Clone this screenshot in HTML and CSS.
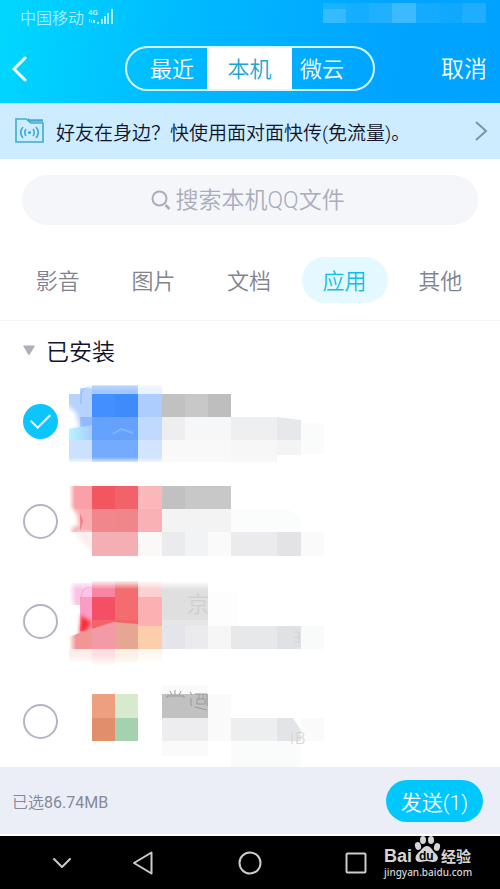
FILE: index.html
```html
<!DOCTYPE html>
<html lang="zh-CN">
<head>
  <meta charset="UTF-8" />
  <meta name="viewport" content="width=device-width, initial-scale=1.0"/>
  <title>本机文件</title>
  <link rel="stylesheet" href="styles.css">
</head>
<body>

  <header class="top">
    <div class="status">
      <span>中国移动</span>
      <svg class="signal" width="26" height="18" viewBox="0 0 26 18" fill="#a5efff">
        <text x="0" y="7" class="signal-text">4G</text>
        <path d="M1 11h1v3H1zM3 12h1v3H3zM5 12h2v3H5zM9 14h2v2H9zM13 11h2v5h-2zM16 8h2v8h-2zM19 5h2v11h-2zM23 1h2v15h-2z"/>
      </svg>
      <svg class="status-right" width="163" height="20" viewBox="0 0 163 20" fill="#fff">
        <path d="M0 0h23v20H0z" opacity=".1"/>
        <path d="M0 6h23v14H0z" opacity=".12"/>
        <path d="M23 0h23v20H23z" opacity=".08"/>
        <path d="M46 0h23v20H46z" opacity=".12"/>
        <path d="M69 0h24v20H69z" opacity=".24"/>
        <path d="M93 0h23v20H93z" opacity=".08"/>
        <path d="M116 0h23v20h-23z" opacity=".06"/>
        <path d="M139 0h24v20h-24z" opacity=".12"/>
      </svg>
    </div>
    <nav class="nav">
      <button class="back" aria-label="返回">
        <svg width="16" height="28" viewBox="0 0 16 28" fill="none" stroke="#fff" stroke-width="3" stroke-linecap="round"><path d="M13 3L2 14L13 25"/></svg>
      </button>
      <div class="segment">
        <button class="seg-left">最近</button>
        <button class="seg-active">本机</button>
        <button class="seg-right">微云</button>
      </div>
      <button class="cancel">取消</button>
    </nav>
  </header>

  <a class="banner" href="#">
    <svg width="30" height="26" viewBox="0 0 30 26" fill="none" stroke="#3fabd6" stroke-width="1.6">
      <path d="M1 1h10l5 4h12v19H1zM15 2h13M13 1l3 2h12"/>
      <circle cx="14.500" cy="14.500" r="1.600" fill="#3fabd6" stroke="none"/>
      <path d="M11 11Q8.500 14.500 11 18M18 11Q20.500 14.500 18 18M8 9Q3.500 14.500 8 20M21 9Q25.500 14.500 21 20"/>
    </svg>
    <span>好友在身边？快使用面对面快传(免流量)。</span>
    <svg class="arrow" width="14" height="22" viewBox="0 0 14 22" fill="none" stroke="#7d93a2" stroke-width="2"><path d="M2 2L12 11L2 20"/></svg>
  </a>

  <label class="search">
    <svg width="20" height="20" viewBox="0 0 20 20" fill="none" stroke="#a9acbb" stroke-width="2"><circle cx="8.500" cy="8.500" r="7"/><path d="M14.500 15l4 4" stroke-width="2.500"/></svg>
    <input type="text" placeholder="搜索本机QQ文件" aria-label="搜索本机QQ文件" />
  </label>

  <div class="tabs">
    <button>影音</button>
    <button>图片</button>
    <button>文档</button>
    <button class="active">应用</button>
    <button>其他</button>
  </div>

  <main class="files">
    <h2 class="group">
      <svg width="12" height="10" viewBox="0 0 12 10"><path d="M1 .5h10q1 0 .6 1L6.800 9.500q-.8.800-1.600 0L.4 1.500Q0 .5 1 .5z" fill="#adb0be"/></svg>
      已安装
    </h2>

    <div class="row">
      <input type="checkbox" aria-label="文件1" checked />
      <svg width="255" height="100" viewBox="0 0 255 100">
        <defs>
          <linearGradient id="fade" x2="0" y2="1"><stop offset="0" stop-color="#fff"/><stop offset="1" stop-color="#fff" stop-opacity="0"/></linearGradient>
          <linearGradient id="rise" x2="0" y2="1"><stop offset="0" stop-color="#fff" stop-opacity="0"/><stop offset="1" stop-color="#fff"/></linearGradient>
          <linearGradient id="side"><stop offset="0" stop-color="#fff"/><stop offset="1" stop-color="#fff" stop-opacity="0"/></linearGradient>
          <linearGradient id="cyan"><stop offset="0" stop-color="#b9f3ff"/><stop offset="1" stop-color="#a7cdff"/></linearGradient>
          <filter id="soft" x="-50%" y="-50%" width="200%" height="200%"><feGaussianBlur stdDeviation="2"/></filter>
        </defs>
        <path d="M0 23h23v46H0z" fill="#b7d2ff"/>
        <path d="M11 46h12v14H11z" fill="#8fbaff"/>
        <path d="M-4 32L7 42 11 58-4 60z" fill="#fff" filter="url(#soft)"/>
        <path d="M0 58l23-4v15H0z" fill="url(#cyan)"/>
        <path d="M0 69h23v22H0z" fill="#cce0ff"/>
        <path d="M11 23V17h58v6z" fill="#b4d2ff"/>
        <path d="M23 14h46v10H23z" fill="#a3c8ff"/>
        <path d="M23 23h23v23H23z" fill="#438fff"/>
        <path d="M46 23h23v23H46z" fill="#3e8bfa"/>
        <path d="M23 46h46v23H23z" fill="#65a2fd"/>
        <path d="M23 69h46v22H23z" fill="#73abff"/>
        <path d="M69 14h24v9H69z" fill="#eaf2ff"/>
        <path d="M69 23h24v23H69z" fill="#adcdff"/>
        <path d="M69 46h24v23H69z" fill="#bfd9ff"/>
        <path d="M69 69h24v22H69z" fill="#d2e4ff"/>
        <path d="M12 33V24Q12 17 20 16H68" fill="none" stroke="#6da5ef" opacity=".6"/>
        <path d="M44 63l8-5 12 4" fill="none" stroke="#83b4ff" stroke-width="2"/>
        <path d="M0 10h93v9H0z" fill="url(#fade)"/>
        <path d="M0 86h93v7H0z" fill="url(#rise)"/>
        <path d="M93 23h23v23H93z" fill="#c1c1c1"/>
        <path d="M116 23h23v23h-23z" fill="#c8c8c8"/>
        <path d="M139 23h23v23h-23z" fill="#bebebe"/>
        <path d="M93 46h23v23H93z" fill="#eeeef0"/>
        <path d="M116 46h46v23h-46z" fill="#f6f7f9"/>
        <path d="M162 46h46v23h-46z" fill="#edeff1"/>
        <path d="M208 46l24 3v20h-24z" fill="#e7e8eb"/>
        <path d="M232 52h23v31h-23z" fill="#fafbfb"/>
        <path d="M93 69h69v22H93z" fill="#f9f9f9"/>
        <path d="M162 69h46v22h-46z" fill="#f7f7f7"/>
        <path d="M208 69h24v15h-24z" fill="#f4f4f4"/>
      </svg>
    </div>

    <div class="row">
      <input type="checkbox" aria-label="文件2" />
      <svg width="255" height="100" viewBox="0 0 255 100">
        <path d="M0 15h23v23H0z" fill="#faa0a6"/>
        <path d="M0 38h23v23H0z" fill="#f9adb1"/>
        <path d="M11 42l3 8-3 10z" fill="#ee757d"/>
        <path d="M-3 34L8 42 10 55-3 57z" fill="#fff" filter="url(#soft)"/>
        <path d="M5 61h18v20z" fill="#fdebec" filter="url(#soft)"/>
        <path d="M23 15h23v23H23z" fill="#f2565f"/>
        <path d="M46 15h23v23H46z" fill="#f1626b"/>
        <path d="M23 38h23v23H23z" fill="#f1868d"/>
        <path d="M46 38h23v23H46z" fill="#f0868a"/>
        <path d="M23 61h46v24H23z" fill="#f3afb3"/>
        <path d="M69 15h24v23H69z" fill="#fbb8bb"/>
        <path d="M69 38h24v23H69z" fill="#f9b1b5"/>
        <path d="M69 61h24v24H69z" fill="#fdf8f8"/>
        <path d="M0 15h6v46H0z" fill="url(#side)"/>
        <path d="M93 15h23v23H93z" fill="#c1c1c1"/>
        <path d="M116 15h46v23h-46z" fill="#c8c8c8"/>
        <path d="M93 38h69v23H93z" fill="#f3f3f3"/>
        <path d="M162 38h57l13 10v13h-70z" fill="#fbfcfc"/>
        <path d="M93 61h23v24H93z" fill="#eaebed"/>
        <path d="M116 61h23v24h-23z" fill="#f1f3f5"/>
        <path d="M139 61h23v24h-23z" fill="#fafafa"/>
        <path d="M162 61h46v24h-46z" fill="#ebebed"/>
        <path d="M208 61h24v24h-24z" fill="#e3e3e5"/>
        <path d="M232 61h23v24h-23z" fill="#fafafa"/>
      </svg>
    </div>

    <div class="row">
      <input type="checkbox" aria-label="文件3" />
      <svg width="255" height="100" viewBox="0 0 255 100">
        <path d="M0 12h23v22H0z" fill="#fdc3e6"/>
        <path d="M11 26h12v34H11z" fill="#fb9cc4"/>
        <path d="M11 44l12 8-12 14z" fill="#fb252c" filter="url(#soft)"/>
        <path d="M-4 27L8 36 10 54-4 60z" fill="#fff" filter="url(#soft)"/>
        <path d="M0 66l23-9v21H0z" fill="#f19595"/>
        <path d="M23 10h23v16H23z" fill="#f985a2"/>
        <path d="M23 26h23v23H23z" fill="#f54f65"/>
        <path d="M46 10h23v39H46z" fill="#f36d70"/>
        <path d="M23 49h23v29H23z" fill="#f29ba6"/>
        <path d="M46 49h23v29H46z" fill="#e5a794"/>
        <path d="M23 49h46v4l-25-2-21 7z" fill="#f36369"/>
        <path d="M69 10h24v16H69z" fill="#fdd1d1"/>
        <path d="M69 26h24v29H69z" fill="#fdb0b2"/>
        <path d="M69 55h24v23H69z" fill="#fdcdac"/>
        <path d="M0 78h23v12H0z" fill="#fdeeec"/>
        <path d="M23 78h23v16H23z" fill="#fbdee1"/>
        <path d="M46 78h23v14H46z" fill="#fcf0e5"/>
        <path d="M69 78h24v12H69z" fill="#fff8f1"/>
        <path d="M12 32V26Q12 17 22 16H46" fill="none" stroke="#f58fc0" opacity=".6"/>
        <path d="M0 10h7v68H0z" fill="url(#side)"/>
        <path d="M0 9h93v9H0z" fill="url(#fade)"/>
        <path d="M0 84h93v11H0z" fill="url(#rise)"/>
        <path d="M93 11h46v38H93z" fill="#dfdfdf"/>
        <path d="M93 10h46v9H93z" fill="url(#fade)"/>
        <path d="M93 49v6h46v-6z" fill="#e6e6e6"/>
        <text x="118" y="41" class="ghost">京东</text>
        <path d="M139 20h30v35h-30z" fill="#fdfdfd"/>
        <path d="M93 55h23v23H93z" fill="#e3e5ea"/>
        <path d="M116 55h23v23h-23z" fill="#ebebed"/>
        <path d="M139 55h23v23h-23z" fill="#f6f6f6"/>
        <path d="M162 55h46v23h-46z" fill="#e7e8ea"/>
        <path d="M208 55h24v23h-24z" fill="#dfe1e5"/>
        <path d="M232 55h23v23h-23z" fill="#f9fafa"/>
        <path d="M225 61h5v5h-4M230 66v5h-5" fill="none" stroke="#cfd1d6"/>
      </svg>
    </div>

    <div class="row">
      <input type="checkbox" aria-label="文件4" />
      <svg width="255" height="100" viewBox="0 0 255 100">
        <path d="M23 23h23v24H23z" fill="#eda080"/>
        <path d="M46 23h23v24H46z" fill="#d8eacd"/>
        <path d="M23 47h23v23H23z" fill="#e18e6b"/>
        <path d="M46 47h23v23H46z" fill="#a3d2ad"/>
        <path d="M93 14h46v9H93z" fill="#fafafa"/>
        <path d="M93 23h46v24H93z" fill="#c1c1c1"/>
        <path d="M98 27v-2h17v2M101 20l2 4M106 19v5M112 20l-2 4M121 21l2 3M122 27v8M126 23h12v12M128 28h8v5h-8zM130 23v5M134 23v5M126 36l12 3" fill="none" stroke="#999"/>
        <path d="M93 47h46v23H93z" fill="#ededf0"/>
        <path d="M139 23h23v47h-23z" fill="#fafafa"/>
        <path d="M162 47h46v23h-46z" fill="#edeef0"/>
        <path d="M208 47h16l8 12v11h-24z" fill="#e3e4e7"/>
        <path d="M232 47h23v23h-23z" fill="#fafafa"/>
        <path d="M93 70h46v15H93z" fill="#fafafa"/>
        <path d="M162 70h70v26h-70z" fill="#fafbfb"/>
        <text x="226" y="73" class="ghost ghost-small">B</text>
        <path d="M223 61v12" stroke="#d2d3d6"/>
      </svg>
    </div>
  </main>

  <footer class="send-bar">
    <span>已选86.74MB</span>
    <button>发送(1)</button>
  </footer>

  <div class="system">
    <button aria-label="收起"><svg width="20" height="12" viewBox="0 0 20 12"><path d="M2 2l8 8 8-8"/></svg></button>
    <button aria-label="后退"><svg width="22" height="24" viewBox="0 0 22 24"><path d="M19.500 1.500v21L2 12z"/></svg></button>
    <button aria-label="主页"><svg width="24" height="24" viewBox="0 0 24 24"><circle cx="12" cy="12" r="10.500"/></svg></button>
    <button aria-label="最近任务"><svg width="22" height="22" viewBox="0 0 22 22"><rect x="1.500" y="1.500" width="19" height="19" rx="1"/></svg></button>
  </div>

  <div class="watermark">
    <svg width="92" height="44" viewBox="0 0 92 44" fill="#d5d5d5">
      <text x="1" y="27" class="wm-bai">Bai</text>
      <ellipse cx="35" cy="11" rx="3" ry="4" transform="rotate(-15 35 11)"/>
      <ellipse cx="40" cy="5" rx="3" ry="4"/>
      <ellipse cx="48" cy="5" rx="3" ry="4"/>
      <ellipse cx="54" cy="12" rx="3" ry="4" transform="rotate(15 54 12)"/>
      <path d="M44 11c4 0 5 4 8 7 5 4 3 9-2 9-3 0-4-1-6-1s-4 1-7 1c-5 0-6-5-2-9 4-3 5-7 9-7z"/>
      <text x="36" y="25" class="wm-du">du</text>
      <text x="58" y="27" class="wm-cn">经验</text>
      <text x="1" y="41" class="wm-url">jingyan.baidu.com</text>
    </svg>
  </div>

</body>
</html>
```
FILE: styles.css
```css
* { box-sizing: border-box; margin: 0; padding: 0; }

body {
  font-family: Roboto, "Noto Sans CJK SC DemiLight", "Noto Sans CJK SC", sans-serif;
  font-weight: 350;
  background: #fff;
  color: #10132b;
  display: flex;
  flex-direction: column;
  height: 100vh;
  overflow: hidden;
  position: relative;
}

button, input {
  font: inherit;
  color: inherit;
  background: none;
  border: none;
  outline: none;
}

button {
  cursor: pointer;
}

svg {
  display: block;
  flex: none;
}

/* header */
.top {
  background: linear-gradient(100deg, #00d8ff 0%, #00b9ff 38%, #00a5ff 75%, #00a2ff 100%);
  color: #fff;
}

.status {
  display: flex;
  align-items: center;
  height: 34px;
  padding: 0 14px 0 20px;
  font-size: 16px;
  color: #a5efff;
}

.signal {
  margin-left: 4px;
}

.signal-text {
  font-size: 8px;
  font-weight: 700;
}

.status-right {
  margin-left: auto;
  align-self: flex-start;
  margin-top: 3px;
}

.nav {
  display: grid;
  grid-template-columns: 1fr 250px 1fr;
  align-items: center;
  height: 69px;
  padding: 0 13px 0 12px;
}

.back {
  justify-self: start;
}

.segment {
  display: grid;
  grid-template-columns: 1fr 85px 1fr;
  height: 45px;
  border: 2px solid #d8f6ff;
  border-radius: 24px;
  overflow: hidden;
  font-size: 22px;
}

.segment button, .cancel {
  padding-bottom: 3px;
}

.segment .seg-left {
  text-align: right;
  padding-right: 13px;
}

.seg-active {
  background: #fff;
  color: #1ba5cf;
}

.segment .seg-right {
  text-align: left;
  padding-left: 8px;
}

.cancel {
  justify-self: end;
  font-size: 23px;
}

.banner {
  display: flex;
  align-items: center;
  height: 56px;
  padding: 0 12px 0 15px;
  background: #cdecff;
  color: #10132b;
  font-size: 19px;
  text-decoration: none;
}

.banner span {
  margin-left: 11px;
  white-space: nowrap;
}

.arrow {
  margin-left: auto;
}

/* search + tabs */
.search {
  display: flex;
  align-items: center;
  justify-content: center;
  gap: 5px;
  height: 50px;
  margin: 16px 22px 0;
  border-radius: 25px;
  background: #f4f6fa;
  font-size: 23px;
}

.search input {
  width: 174px;
}

.search input::placeholder {
  color: #a9acbb;
  opacity: 1;
}

.tabs {
  display: grid;
  grid-template-columns: repeat(5, 1fr);
  justify-items: center;
  align-items: center;
  height: 96px;
  padding: 14px 12px 0 10px;
  border-bottom: 1px solid #f5f6f8;
  font-size: 22px;
  color: #81848f;
}

.tabs button {
  height: 46px;
  padding: 0 21px 2px;
  border-radius: 23px;
}

.tabs .active {
  background: #e4f9ff;
  color: #12bfe4;
}

/* file list */
.files {
  flex: 1;
  min-height: 0;
  overflow: hidden;
}

.group {
  display: flex;
  align-items: center;
  gap: 11px;
  height: 50px;
  padding: 8px 23px 0;
  font-size: 23px;
  font-weight: inherit;
}

.row {
  display: flex;
  align-items: center;
  gap: 11px;
  height: 100px;
  padding-left: 23px;
}

.row input {
  appearance: none;
  flex: none;
  width: 35px;
  height: 35px;
  border: 2px solid #b2b5c2;
  border-radius: 50%;
}

.row input:checked {
  display: flex;
  align-items: center;
  justify-content: center;
  border: none;
  background: #0cc5fc;
}

.row input:checked::before {
  content: "";
  width: 17px;
  height: 9px;
  margin-bottom: 5px;
  border-left: 2px solid #fff;
  border-bottom: 2px solid #fff;
  transform: rotate(-45deg);
}

.ghost {
  font-size: 22px;
  fill: #d0d0d0;
}

.ghost-small {
  font-size: 17px;
  fill: #d2d3d6;
}

/* bottom */
.send-bar {
  display: flex;
  align-items: center;
  justify-content: space-between;
  height: 69px;
  padding: 0 17px 0 12px;
  background: #ebeef7;
  border-bottom: 2px solid #fff;
  font-size: 16px;
  font-weight: 400;
  color: #858998;
}

.send-bar button {
  height: 42px;
  padding: 0 15px;
  border-radius: 21px;
  background: #00c8ff;
  color: #fff;
  font-size: 21px;
  font-weight: 350;
}

.system {
  display: grid;
  grid-template-columns: 84fr 78fr 136fr 76fr;
  justify-items: center;
  align-items: center;
  height: 53px;
  padding: 0 106px 0 20px;
  background: #000;
}

.system svg {
  fill: none;
  stroke: #ccc;
  stroke-width: 2;
  stroke-linejoin: round;
  stroke-linecap: round;
}

.watermark {
  position: absolute;
  right: 25px;
  bottom: 10px;
}

.wm-bai {
  font: 700 18px "Liberation Sans", sans-serif;
}

.wm-du {
  font: 700 12px "Liberation Sans", sans-serif;
  fill: #000;
}

.wm-cn {
  font: 700 15px "Noto Sans CJK SC", sans-serif;
}

.wm-url {
  font: 500 10px "Noto Sans", sans-serif;
}
```
